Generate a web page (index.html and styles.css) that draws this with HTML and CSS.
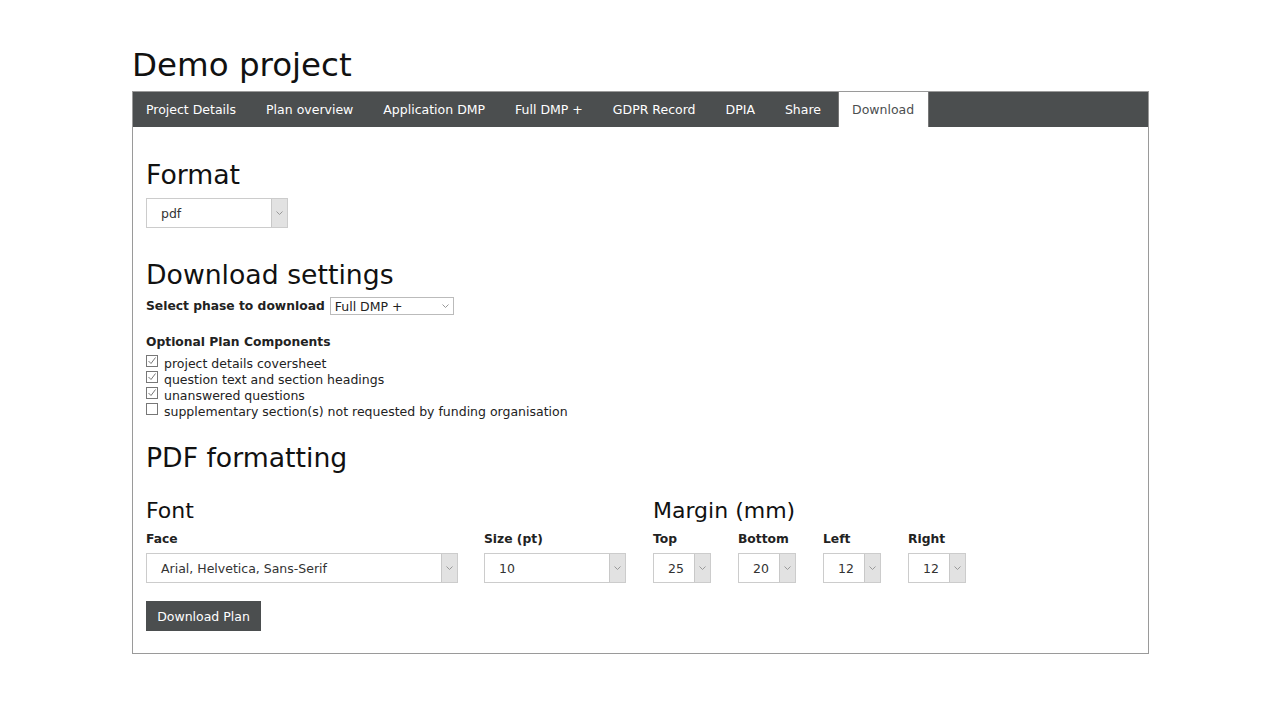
FILE: index.html
```html
<!DOCTYPE html>
<html>
<head>
<meta charset="utf-8">
<link rel="stylesheet" href="styles.css">
</head>
<body>
<div class="page">
  <h1 class="title">Demo project</h1>
  <div class="panel">
    <nav class="tabs">
      <span class="tab">Project Details</span>
      <span class="tab">Plan overview</span>
      <span class="tab">Application DMP</span>
      <span class="tab">Full DMP +</span>
      <span class="tab">GDPR Record</span>
      <span class="tab">DPIA</span>
      <span class="tab">Share</span>
      <span class="tab active">Download</span>
    </nav>
    <div class="content">
      <h2 class="h2">Format</h2>
      <div class="select sel-format">
        <span class="sel-text">pdf</span>
        <span class="sel-arrow"><svg width="7" height="4" viewBox="0 0 7 4"><polyline points="0.5,0.5 3.5,3.5 6.5,0.5" fill="none" stroke="#999" stroke-width="1"/></svg></span>
      </div>

      <h2 class="h2 h2-settings">Download settings</h2>
      <div class="phase-row">
        <span class="lbl">Select phase to download</span>
        <div class="mini-select">
          <span>Full DMP +</span>
          <svg width="7" height="4" viewBox="0 0 7 4"><polyline points="0.5,0.5 3.5,3.5 6.5,0.5" fill="none" stroke="#999" stroke-width="1"/></svg>
        </div>
      </div>

      <div class="lbl opt-title">Optional Plan Components</div>
      <ul class="checks">
        <li><span class="cb"><svg width="10" height="10" viewBox="0 0 10 10"><polyline points="1.5,5 4,7.5 8.5,1.5" fill="none" stroke="#777" stroke-width="1"/></svg></span>project details coversheet</li>
        <li><span class="cb"><svg width="10" height="10" viewBox="0 0 10 10"><polyline points="1.5,5 4,7.5 8.5,1.5" fill="none" stroke="#777" stroke-width="1"/></svg></span>question text and section headings</li>
        <li><span class="cb"><svg width="10" height="10" viewBox="0 0 10 10"><polyline points="1.5,5 4,7.5 8.5,1.5" fill="none" stroke="#777" stroke-width="1"/></svg></span>unanswered questions</li>
        <li><span class="cb"></span>supplementary section(s) not requested by funding organisation</li>
      </ul>

      <h2 class="h2 h2-pdf">PDF formatting</h2>
      <div class="fmt">
        <div class="col-font">
          <h3 class="h3">Font</h3>
          <div class="fields">
            <div class="field f-face">
              <div class="lbl">Face</div>
              <div class="select">
                <span class="sel-text">Arial, Helvetica, Sans-Serif</span>
                <span class="sel-arrow"><svg width="7" height="4" viewBox="0 0 7 4"><polyline points="0.5,0.5 3.5,3.5 6.5,0.5" fill="none" stroke="#999" stroke-width="1"/></svg></span>
              </div>
            </div>
            <div class="field f-size">
              <div class="lbl">Size (pt)</div>
              <div class="select">
                <span class="sel-text">10</span>
                <span class="sel-arrow"><svg width="7" height="4" viewBox="0 0 7 4"><polyline points="0.5,0.5 3.5,3.5 6.5,0.5" fill="none" stroke="#999" stroke-width="1"/></svg></span>
              </div>
            </div>
          </div>
        </div>
        <div class="col-margin">
          <h3 class="h3">Margin (mm)</h3>
          <div class="fields">
            <div class="field f-m">
              <div class="lbl">Top</div>
              <div class="select sm">
                <span class="sel-text">25</span>
                <span class="sel-arrow"><svg width="7" height="4" viewBox="0 0 7 4"><polyline points="0.5,0.5 3.5,3.5 6.5,0.5" fill="none" stroke="#999" stroke-width="1"/></svg></span>
              </div>
            </div>
            <div class="field f-m">
              <div class="lbl">Bottom</div>
              <div class="select sm">
                <span class="sel-text">20</span>
                <span class="sel-arrow"><svg width="7" height="4" viewBox="0 0 7 4"><polyline points="0.5,0.5 3.5,3.5 6.5,0.5" fill="none" stroke="#999" stroke-width="1"/></svg></span>
              </div>
            </div>
            <div class="field f-m">
              <div class="lbl">Left</div>
              <div class="select sm">
                <span class="sel-text">12</span>
                <span class="sel-arrow"><svg width="7" height="4" viewBox="0 0 7 4"><polyline points="0.5,0.5 3.5,3.5 6.5,0.5" fill="none" stroke="#999" stroke-width="1"/></svg></span>
              </div>
            </div>
            <div class="field f-m">
              <div class="lbl">Right</div>
              <div class="select sm">
                <span class="sel-text">12</span>
                <span class="sel-arrow"><svg width="7" height="4" viewBox="0 0 7 4"><polyline points="0.5,0.5 3.5,3.5 6.5,0.5" fill="none" stroke="#999" stroke-width="1"/></svg></span>
              </div>
            </div>
          </div>
        </div>
      </div>
      <button class="btn">Download Plan</button>
    </div>
  </div>
</div>
</body>
</html>
```
FILE: styles.css
```css
html, body {
  margin: 0;
  padding: 0;
  background: #fff;
}
body {
  font-family: "DejaVu Sans", Verdana, sans-serif;
  color: #222;
  font-size: 12.5px;
}
.page {
  width: 1017px;
  margin-left: 132px;
  padding-top: 45px;
}
.title {
  margin: 0 0 6px 0;
  font-size: 32.5px;
  line-height: 40px;
  font-weight: normal;
  color: #111;
}
.panel {
  border: 1px solid #9a9a9a;
}
.tabs {
  display: flex;
  background: #4b4e4f;
  height: 35px;
}
.tab {
  display: flex;
  align-items: center;
  padding: 0 15px 0 13px;
  color: #fff;
  font-size: 12.5px;
  margin-right: 2px;
}
.tab.active {
  background: #fff;
  color: #4b4e4f;
  border-left: 1px solid #777;
  border-right: 1px solid #777;
  padding: 0 14px 0 13px;
}
.content {
  padding: 31px 13px 22px 13px;
}
.h2 {
  margin: 0;
  font-size: 26.7px;
  line-height: 34px;
  font-weight: normal;
  color: #111;
}
.h2-settings { margin-top: 30px; }
.h2-pdf { margin-top: 21px; }
.h3 {
  margin: 0;
  font-size: 22px;
  line-height: 26px;
  font-weight: normal;
  color: #111;
}
.select {
  display: flex;
  height: 30px;
  box-sizing: border-box;
  border: 1px solid #ccc;
  background: #fff;
  margin-top: 5px;
}
.sel-format {
  width: 142px;
  margin-top: 6px;
}
.sel-text {
  flex: 1;
  display: flex;
  align-items: center;
  padding-left: 14px;
  color: #333;
  font-size: 12.5px;
}
.sel-arrow {
  width: 15px;
  background: #e2e2e2;
  border-left: 1px solid #c8c8c8;
  display: flex;
  align-items: center;
  justify-content: center;
}
.phase-row {
  display: flex;
  align-items: center;
  margin-top: 5px;
  height: 18px;
}
.lbl {
  font-weight: bold;
  font-size: 12.3px;
  line-height: 18px;
  color: #222;
}
.mini-select {
  margin-left: 5px;
  width: 124px;
  height: 18px;
  box-sizing: border-box;
  border: 1px solid #bbb;
  display: flex;
  align-items: center;
  justify-content: space-between;
  padding: 0 4px 0 4px;
  font-size: 12.5px;
  color: #222;
}
.opt-title {
  margin-top: 19px;
  line-height: 16px;
}
.checks {
  list-style: none;
  margin: 6px 0 0 0;
  padding: 0;
}
.checks li {
  display: flex;
  align-items: center;
  height: 16px;
  line-height: 16px;
  font-size: 12.5px;
  color: #222;
}
.cb {
  width: 12px;
  height: 12px;
  box-sizing: border-box;
  border: 1px solid #777;
  margin-right: 6px;
  margin-top: -6px;
  display: flex;
  align-items: center;
  justify-content: center;
  background: #fff;
}
.fmt {
  display: flex;
  margin-top: 23px;
}
.col-font {
  width: 507px;
}
.fields {
  display: flex;
  margin-top: 6px;
}
.f-face { width: 312px; margin-right: 26px; }
.f-size { width: 142px; }
.f-m { width: 58px; margin-right: 27px; }
.btn {
  margin-top: 18px;
  height: 30px;
  width: 115px;
  border: none;
  background: #4b4e4f;
  color: #fff;
  font-family: "DejaVu Sans", Verdana, sans-serif;
  font-size: 12.5px;
  padding: 0;
  display: block;
}
```
